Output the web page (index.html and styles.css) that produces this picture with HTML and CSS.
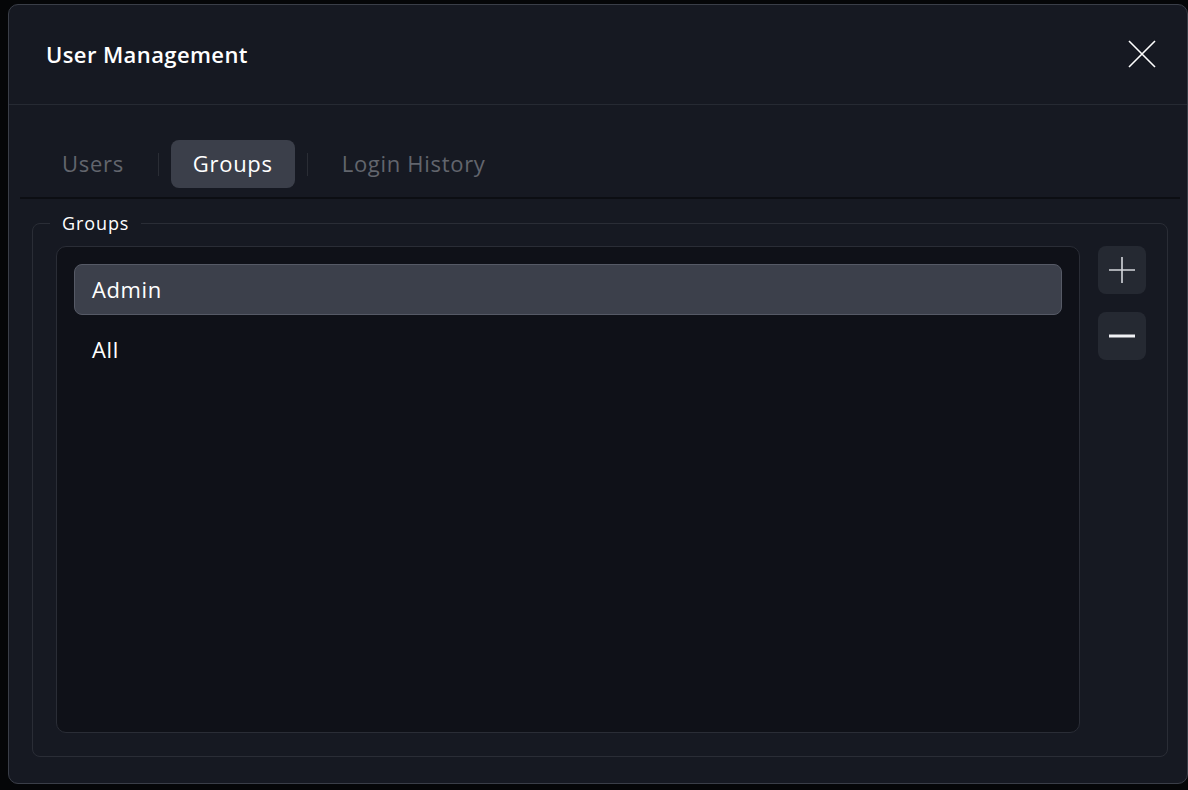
FILE: index.html
```html
<!DOCTYPE html>
<html lang="en">
<head>
<meta charset="utf-8">
<title>User Management</title>
<link rel="stylesheet" href="styles.css">
</head>
<body>
<div class="dialog">
  <header class="header">
    <h1 class="title">User Management</h1>
    <button class="close" aria-label="Close">
      <svg width="28" height="28" viewBox="0 0 28 28"><path d="M1 1L27 27M27 1L1 27" stroke="#ffffff" stroke-width="1.6" fill="none"/></svg>
    </button>
  </header>
  <nav class="tabs">
    <span class="tab">Users</span>
    <span class="sep"></span>
    <span class="tab active">Groups</span>
    <span class="sep"></span>
    <span class="tab">Login History</span>
  </nav>
  <fieldset class="group-box">
    <legend class="legend">Groups</legend>
    <div class="group-body">
      <ul class="list">
        <li class="item selected">Admin</li>
        <li class="item">All</li>
      </ul>
      <div class="actions">
        <button class="icon-btn" aria-label="Add">
          <svg width="28" height="28" viewBox="0 0 28 28"><path d="M14 1V27M1 14H27" stroke="#d4d6dc" stroke-width="1.6" fill="none"/></svg>
        </button>
        <button class="icon-btn" aria-label="Remove">
          <svg width="28" height="28" viewBox="0 0 28 28"><path d="M1 14H27" stroke="#f0f1f4" stroke-width="3" fill="none"/></svg>
        </button>
      </div>
    </div>
  </fieldset>
</div>
</body>
</html>
```
FILE: styles.css
```css
html, body {
  margin: 0;
  padding: 0;
  background: #050608;
  height: 790px;
  overflow: hidden;
  font-family: "Open Sans", "Liberation Sans", sans-serif;
}

.dialog {
  box-sizing: border-box;
  margin: 4px 0 0 8px;
  width: 1180px;
  height: 780px;
  background: #161922;
  border: 1px solid #3a3e48;
  border-radius: 10px;
  display: flex;
  flex-direction: column;
}

.header {
  box-sizing: border-box;
  height: 100px;
  padding: 0 31px 1px 37px;
  border-bottom: 1px solid #262a33;
  display: flex;
  align-items: center;
  justify-content: space-between;
}

.title {
  margin: 0;
  color: #ffffff;
  font-size: 22px;
  font-weight: 600;
  letter-spacing: 0.4px;
}

.close {
  background: none;
  border: 0;
  padding: 0;
  width: 28px;
  height: 28px;
  display: flex;
}

.tabs {
  margin: 35px 7px 0 11px;
  padding: 0 20px 9px;
  border-bottom: 2px solid #0c0e13;
  display: flex;
  align-items: center;
  gap: 12px;
}

.tab {
  height: 48px;
  line-height: 47px;
  padding: 0 22px;
  border-radius: 8px;
  font-size: 22px;
  letter-spacing: 0.7px;
  color: #62656d;
}

.tab.active {
  background: #3b3f4a;
  color: #ffffff;
}

.sep {
  width: 1px;
  height: 23px;
  background: #2a2d35;
}

.group-box {
  margin: 13px 19px 26px 23px;
  padding: 12px 21px 23px 23px;
  border: 1px solid #2a2d36;
  border-radius: 8px;
  flex: 1;
  min-height: 0;
  display: flex;
}

.legend {
  margin-left: -6px;
  padding: 0 12px;
  color: #ffffff;
  font-size: 18px;
  letter-spacing: 0.9px;
  line-height: 22px;
}

.group-body {
  flex: 1;
  display: flex;
  gap: 18px;
  height: 100%;
}

.list {
  box-sizing: border-box;
  margin: 0;
  flex: 1;
  list-style: none;
  padding: 17px;
  background: #0f1118;
  border: 1px solid #2a2d36;
  border-radius: 10px;
  display: flex;
  flex-direction: column;
  gap: 9px;
}

.item {
  box-sizing: border-box;
  height: 51px;
  line-height: 49px;
  padding: 0 17px;
  border: 1px solid transparent;
  border-radius: 8px;
  font-size: 22px;
  letter-spacing: 0.6px;
  color: #ffffff;
}

.item.selected {
  background: #3c404b;
  border-color: #565a66;
}

.actions {
  display: flex;
  flex-direction: column;
  gap: 18px;
}

.icon-btn {
  width: 48px;
  height: 48px;
  border: 0;
  padding: 0;
  border-radius: 8px;
  background: #252932;
  display: flex;
  align-items: center;
  justify-content: center;
}
```
